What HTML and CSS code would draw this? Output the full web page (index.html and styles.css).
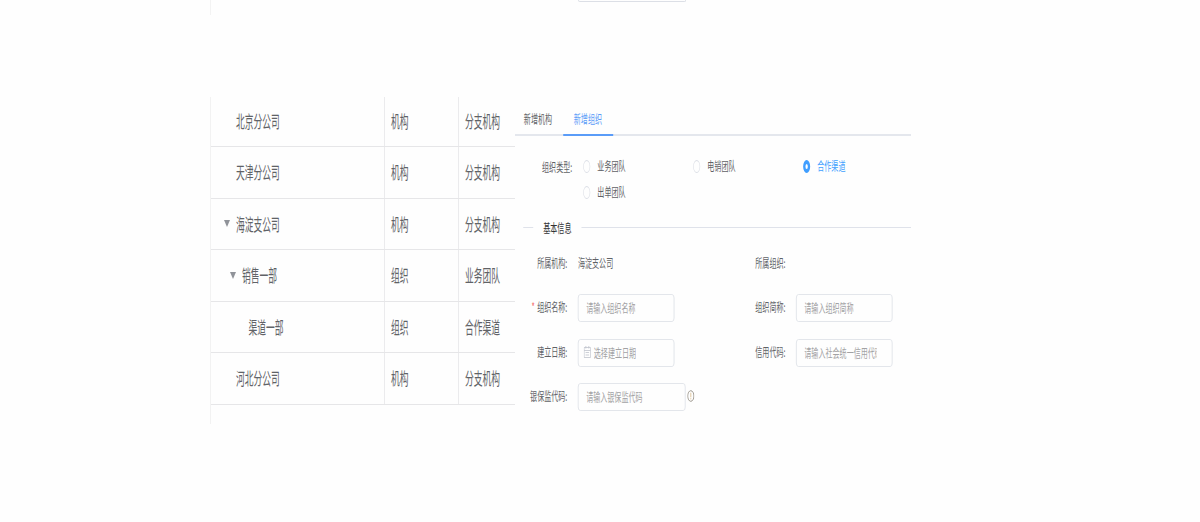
FILE: index.html
```html
<!DOCTYPE html>
<html lang="zh-CN">
<head>
    <meta charset="utf-8">
    <title>组织管理</title>
    <link rel="stylesheet" href="styles.css">
</head>
<body>
    <div class="top-strip">
        <div class="strip-line"></div>
        <div class="strip-input"></div>
    </div>

    <div class="content">
        <div class="table-panel">
            <div class="org-table">
                <div class="row"><div class="cell name">北京分公司</div><div class="cell">机构</div><div class="cell">分支机构</div></div>
                <div class="row"><div class="cell name">天津分公司</div><div class="cell">机构</div><div class="cell">分支机构</div></div>
                <div class="row"><div class="cell name"><i class="arrow"></i>海淀支公司</div><div class="cell">机构</div><div class="cell">分支机构</div></div>
                <div class="row"><div class="cell name level-1"><i class="arrow"></i>销售一部</div><div class="cell">组织</div><div class="cell">业务团队</div></div>
                <div class="row"><div class="cell name level-2">渠道一部</div><div class="cell">组织</div><div class="cell">合作渠道</div></div>
                <div class="row"><div class="cell name">河北分公司</div><div class="cell">机构</div><div class="cell">分支机构</div></div>
            </div>
        </div>

        <div class="form-panel">
            <div class="org-form">
                <div class="tabs">
                    <div class="tab">新增机构</div>
                    <div class="tab active">新增组织</div>
                </div>

                <div class="type-group">
                    <div class="type-label">组织类型:</div>
                    <div class="radios">
                        <div class="radio"><span class="dot"></span>业务团队</div>
                        <div class="radio"><span class="dot"></span>电销团队</div>
                        <div class="radio checked"><span class="dot"></span>合作渠道</div>
                        <div class="radio"><span class="dot"></span>出单团队</div>
                    </div>
                </div>

                <div class="divider"><span>基本信息</span></div>

                <div class="fields">
                    <div class="field"><div class="label">所属机构:</div><div class="value">海淀支公司</div></div>
                    <div class="field"><div class="label">所属组织:</div></div>
                    <div class="field"><div class="label"><b class="required">*</b>组织名称:</div><div class="input"><span>请输入组织名称</span></div></div>
                    <div class="field"><div class="label">组织简称:</div><div class="input"><span>请输入组织简称</span></div></div>
                    <div class="field">
                        <div class="label">建立日期:</div>
                        <div class="input date">
                            <svg width="12" height="12" viewBox="0 0 12 12" fill="none" stroke="#c0c4cc">
                                <path d="M.5 1.5h11v10H.5zM.5 4.5h11M3.5 0v2.5M8.5 0v2.5M3 6.5h6M3 9h6"/>
                            </svg>
                            <span>选择建立日期</span>
                        </div>
                    </div>
                    <div class="field"><div class="label">信用代码:</div><div class="input"><span>请输入社会统一信用代码</span></div></div>
                    <div class="field">
                        <div class="label">银保监代码:</div>
                        <div class="input wide"><span>请输入银保监代码</span></div>
                        <svg class="info" width="12" height="12" viewBox="0 0 12 12" fill="none" stroke="#8a8378">
                            <circle cx="6" cy="6" r="5.3"/>
                            <path d="M6 2.7v4.6M6 8.2v1.2" stroke="#d9b98a"/>
                        </svg>
                    </div>
                </div>
            </div>
        </div>
    </div>
</body>
</html>
```
FILE: styles.css
```css
* {
    box-sizing: border-box;
}

body {
    margin: 0;
    width: 1200px;
    height: 522px;
    overflow: hidden;
    background: #fefefe;
    color: #606266;
    font-family: "Noto Sans CJK SC", sans-serif;
}

.top-strip {
    display: flex;
    height: 97px;
    padding-left: 210px;
}

.strip-line {
    width: 1px;
    height: 15px;
    background: #f3f3f3;
}

.strip-input {
    width: 108px;
    height: 2px;
    margin-left: 367px;
    border: 1px solid #dcdfe6;
    border-top: 0;
    border-radius: 0 0 3px 3px;
}

.content {
    display: flex;
    padding-left: 210px;
}

/* both panels are laid out at full width and condensed horizontally */
.table-panel {
    width: 305px;
    height: 327px;
    overflow: hidden;
}

.org-table {
    width: 610px;
    height: 327px;
    border-left: 2px solid #f2f2f2;
    transform: scaleX(.5);
    transform-origin: 0 0;
    font-size: 17.5px;
}

.row {
    display: flex;
    height: 51.5px;
    border-bottom: 1.5px solid #e6e6e8;
}

.row:first-child {
    height: 50px;
}

.cell {
    flex: none;
    width: 148px;
    padding-left: 12px;
    border-right: 2px solid #ebebed;
    line-height: 49px;
    white-space: nowrap;
}

.row:first-child .cell {
    line-height: 48px;
}

.cell:last-child {
    border-right: 0;
}

.cell.name {
    display: flex;
    align-items: center;
    width: 348px;
    padding: 0 0 1px 50px;
}

.cell.level-1 {
    padding-left: 62px;
}

.cell.level-2 {
    padding-left: 75px;
}

.arrow {
    margin: 1px 12px 0 -24px;
    border: 6px solid transparent;
    border-top: 7px solid #909399;
    border-bottom: 0;
}

.form-panel {
    width: 396px;
    height: 327px;
    overflow: hidden;
}

.org-form {
    width: 673.5px;
    transform: scaleX(.588);
    transform-origin: 0 0;
    font-size: 12px;
}

.tabs {
    display: flex;
    height: 39px;
    border-bottom: 2px solid #e4e7ed;
}

.tab {
    height: 39px;
    padding: 0 18px 0 15px;
    line-height: 43px;
}

.tab.active {
    width: 85px;
    margin-left: 1px;
    padding-left: 18px;
    border-bottom: 2px solid #5a9cf8;
    color: #5a9cf8;
}

.type-group {
    display: flex;
    height: 77px;
    padding: 18px 0 0 46px;
}

.type-label {
    flex: none;
    width: 70px;
    line-height: 26px;
}

.radios {
    display: grid;
    grid-template-columns: repeat(3, 187px);
    grid-template-rows: 26px 26px;
    margin-top: -1px;
    line-height: 26px;
}

.radio {
    display: flex;
    align-items: center;
}

.dot {
    width: 12px;
    height: 13px;
    margin-right: 12px;
    border: 1px solid #dcdfe6;
    border-radius: 50%;
}

.radio.checked {
    color: #409eff;
}

.checked .dot {
    border: 4px solid #409eff;
}

.divider {
    display: flex;
    align-items: center;
    height: 29px;
    padding-left: 14px;
    color: #303133;
}

.divider::before,
.divider::after {
    content: "";
    width: 17px;
    height: 1px;
    background: #dfe2ea;
}

.divider::after {
    flex: 1;
}

.divider span {
    margin: 0 17px;
}

.fields {
    display: grid;
    grid-template-columns: 371px 1fr;
    grid-template-rows: 45px 45px 45px 44px;
    margin-top: -2px;
}

.field {
    display: flex;
    align-items: center;
    white-space: nowrap;
}

.label,
.value {
    padding-bottom: 3px;
}

.field:nth-child(-n+2) .label,
.field:nth-child(-n+2) .value {
    padding-bottom: 1px;
}

.label {
    width: 89px;
    margin-right: 18px;
    text-align: right;
}

.required {
    margin-right: 4px;
    color: #f56c6c;
    font-weight: normal;
}

.input {
    display: flex;
    align-items: center;
    width: 164px;
    height: 28px;
    padding: 0 26px 1px 13px;
    border: 1px solid #dcdfe6;
    border-radius: 4px;
    color: #a2a2a4;
}

.input span {
    overflow: hidden;
}

.input.date {
    padding-left: 9px;
}

.date svg {
    margin-right: 5px;
    flex: none;
}

.input.wide {
    width: 183px;
}

.info {
    margin: 0 0 2px 3px;
}
```
